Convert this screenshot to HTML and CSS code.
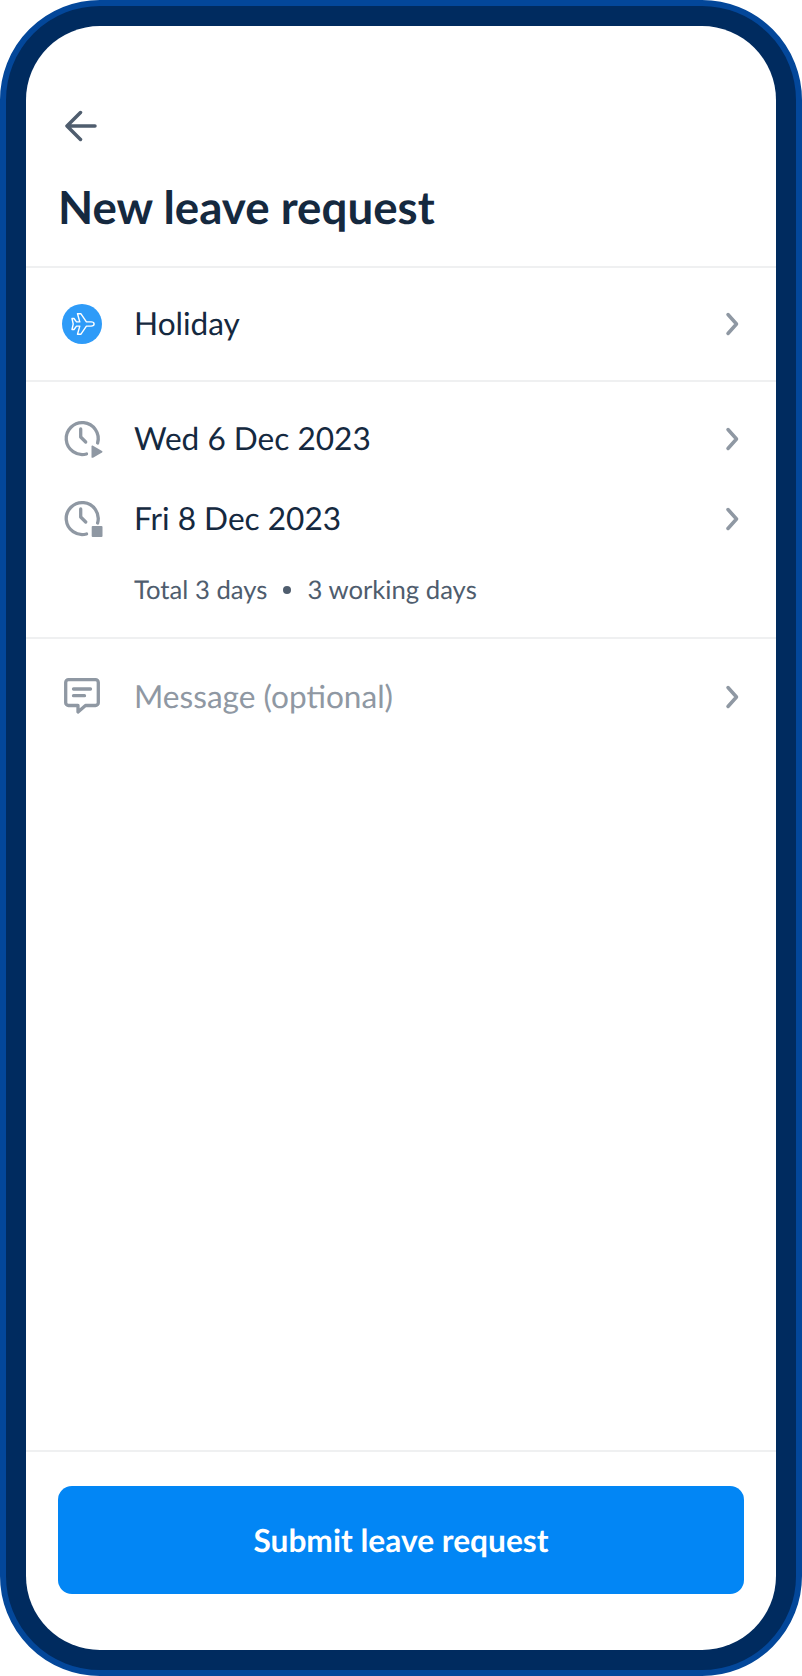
FILE: index.html
```html
<!DOCTYPE html>
<html lang="en">
<head>
    <meta charset="UTF-8">
    <title>New leave request</title>
    <link rel="stylesheet" href="styles.css">
</head>
<body>
    <div class="phone">
        <div class="screen">
            <header class="page-head">
                <svg class="back-icon" viewBox="0 0 32 32" fill="none" stroke="#4f5d6e" stroke-width="3.5" stroke-linecap="round" stroke-linejoin="round">
                    <path d="M30 16H3M15.500 2.500 2 16l13.500 13.500"/>
                </svg>
                <h1>New leave request</h1>
            </header>

            <section class="group group-single">
                <div class="row">
                    <svg class="row-icon" viewBox="0 0 40 40">
                        <circle cx="20" cy="20" r="20" fill="#2e9bf8"/>
                        <path d="M10 14.500h2l2.500 3.400h3.300L15.500 9.700h3.300l5.600 8.200h4.700c1.800 0 3 .9 3 2.100s-1.200 2.100-3 2.100h-4.700l-5.600 8.200h-3.300l2.300-8.200h-3.300L12 25.500h-2l1.200-5.500z" fill="none" stroke="#fff" stroke-width="1.400" stroke-linejoin="round"/>
                    </svg>
                    <span class="row-text">Holiday</span>
                    <svg class="chevron" viewBox="0 0 16 24"><path d="M5 2.500 13.500 12 5 21.500"/></svg>
                </div>
            </section>

            <section class="group group-dates">
                <div class="row">
                    <svg class="row-icon" viewBox="0 0 40 40">
                        <path d="M35.600 24A16 16 0 1 0 24.500 35" fill="none" stroke="#8f98a3" stroke-width="3.300" stroke-linecap="round"/>
                        <path d="M18.700 10v8l5 5" fill="none" stroke="#8f98a3" stroke-width="3.300" stroke-linecap="round" stroke-linejoin="round"/>
                        <path d="M29.500 27.500c0-.8.800-1.200 1.500-.8l9 5.200c.6.400.6 1.200 0 1.600l-9 5.200c-.7.400-1.500 0-1.500-.8z" fill="#8f98a3"/>
                    </svg>
                    <span class="row-text">Wed 6 Dec 2023</span>
                    <svg class="chevron" viewBox="0 0 16 24"><path d="M5 2.500 13.500 12 5 21.500"/></svg>
                </div>
                <div class="row">
                    <svg class="row-icon" viewBox="0 0 40 40">
                        <path d="M35.600 24A16 16 0 1 0 24.500 35" fill="none" stroke="#8f98a3" stroke-width="3.300" stroke-linecap="round"/>
                        <path d="M18.700 10v8l5 5" fill="none" stroke="#8f98a3" stroke-width="3.300" stroke-linecap="round" stroke-linejoin="round"/>
                        <rect x="29.700" y="27" width="10.800" height="11" rx="1" fill="#8f98a3"/>
                    </svg>
                    <span class="row-text">Fri 8 Dec 2023</span>
                    <svg class="chevron" viewBox="0 0 16 24"><path d="M5 2.500 13.500 12 5 21.500"/></svg>
                </div>
                <p class="totals"><span>Total 3 days</span><i class="dot"></i><span>3 working days</span></p>
            </section>

            <section class="group-message">
                <div class="row">
                    <svg class="row-icon" viewBox="0 0 40 40" fill="none" stroke="#8f98a3" stroke-width="3.300" stroke-linecap="round" stroke-linejoin="round">
                        <path d="M6.500 2.700h27a2.800 2.800 0 0 1 2.800 2.800v20.200a2.800 2.800 0 0 1-2.800 2.800H23.500L16 35V28.500H6.500a2.800 2.800 0 0 1-2.800-2.800V5.500a2.800 2.800 0 0 1 2.800-2.800z"/>
                        <path d="M11.500 12h17M11.500 18.700h11"/>
                    </svg>
                    <span class="row-text placeholder">Message (optional)</span>
                    <svg class="chevron" viewBox="0 0 16 24"><path d="M5 2.500 13.500 12 5 21.500"/></svg>
                </div>
            </section>

            <footer class="page-foot">
                <button class="submit">Submit leave request</button>
            </footer>
        </div>
    </div>
</body>
</html>
```

FILE: styles.css
```css
html, body {
    margin: 0;
    padding: 0;
    background: #fff;
}
body {
    font-family: Lato, "Open Sans", sans-serif;
    color: #15293f;
    text-rendering: geometricPrecision;
}
.phone {
    box-sizing: border-box;
    width: 802px;
    height: 1676px;
    border: 6px solid #03479a;
    border-radius: 100px;
    background: #002b5f;
    padding: 20px;
}
.screen {
    height: 100%;
    background: #fff;
    border-radius: 74px;
    display: flex;
    flex-direction: column;
    overflow: hidden;
}
.page-head {
    padding: 84px 32px 0;
    height: 242px;
    box-sizing: border-box;
    border-bottom: 2px solid #eff0f1;
}
.back-icon {
    display: block;
    width: 32px;
    height: 32px;
    margin-left: 7px;
}
h1 {
    margin: 37px 0 0;
    font-size: 45.7px;
    line-height: 56px;
    font-weight: 700;
    color: #15293f;
}
.group {
    border-bottom: 2px solid #eff0f1;
}
.group-single {
    padding: 27px 0;
}
.group-dates {
    padding: 28px 0 31px;
}
.group-message {
    padding: 29px 0;
}
.row {
    display: flex;
    align-items: center;
    height: 58px;
    padding: 0 37px 0 36px;
}
.group-dates .row + .row {
    margin-top: 22px;
}
.row-icon {
    width: 40px;
    height: 40px;
    flex: none;
    overflow: visible;
}
.row-text {
    flex: 1;
    margin: 0 0 2px 32px;
    font-size: 31.6px;
    line-height: 40px;
}
.placeholder {
    color: #8f98a3;
}
.chevron {
    width: 16px;
    height: 24px;
    flex: none;
    fill: none;
    stroke: #8f98a3;
    stroke-width: 3.500;
    stroke-linecap: round;
    stroke-linejoin: round;
}
.totals {
    display: flex;
    align-items: center;
    margin: 26px 0 0 108px;
    font-size: 25.7px;
    line-height: 32px;
    color: #4f5d6e;
}
.dot {
    width: 8px;
    height: 8px;
    border-radius: 50%;
    background: #4f5d6e;
    margin: 0 16px;
}
.page-foot {
    margin-top: auto;
    height: 200px;
    box-sizing: border-box;
    border-top: 2px solid #eff0f1;
    padding: 34px 32px 0;
}
.submit {
    display: block;
    width: 100%;
    height: 108px;
    border: 0;
    border-radius: 14px;
    background: #0286f5;
    color: #fff;
    font-family: inherit;
    font-size: 31.7px;
    font-weight: 700;
    text-rendering: geometricPrecision;
}
```
